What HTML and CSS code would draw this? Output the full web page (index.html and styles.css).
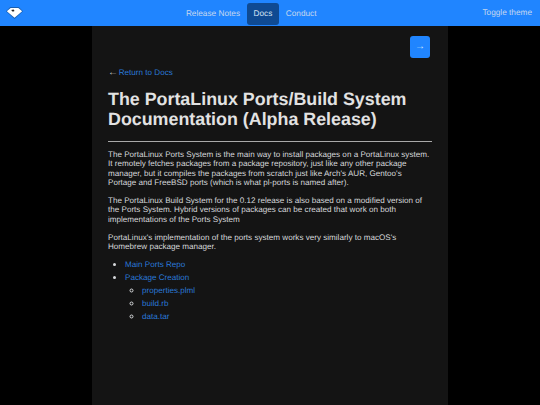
FILE: index.html
```html
<!DOCTYPE html>
<html lang="en">
<head>
<meta charset="utf-8">
<title>PortaLinux Ports</title>
<link rel="stylesheet" href="styles.css">
</head>
<body>
<header class="navbar">
  <a class="brand" href="#"><svg viewBox="0 0 20 14" width="17" height="12"><path fill="#1a5fb0" d="M0 5 5 0h10l5 5-10 9z"/><path fill="#fff" d="M1 5 5.500 1h9L19 5l-9 7.500z"/><path fill="#222" d="M6 3.500 9 2.800 10 4.500 8 5.500z"/></svg></a>
  <nav class="links">
    <a class="link" href="#">Release Notes</a>
    <a class="link active" href="#">Docs</a>
    <a class="link" href="#">Conduct</a>
  </nav>
  <a class="toggle" href="#">Toggle theme</a>
</header>
<main class="page">
  <div class="next-row"><a class="next" href="#">→</a></div>
  <p class="back"><span class="arrow">←</span> <a href="#">Return to Docs</a></p>
  <h1>The PortaLinux Ports/Build System Documentation (Alpha Release)</h1>
  <hr>
  <p>The PortaLinux Ports System is the main way to install packages on a PortaLinux system. It remotely fetches packages from a package repository, just like any other package manager, but it compiles the packages from scratch just like Arch's AUR, Gentoo's Portage and FreeBSD ports (which is what pl-ports is named after).</p>
  <p>The PortaLinux Build System for the 0.12 release is also based on a modified version of the Ports System. Hybrid versions of packages can be created that work on both implementations of the Ports System</p>
  <p>PortaLinux's implementation of the ports system works very similarly to macOS's Homebrew package manager.</p>
  <ul>
    <li><a href="#">Main Ports Repo</a></li>
    <li><a href="#">Package Creation</a>
      <ul>
        <li><a href="#">properties.plml</a></li>
        <li><a href="#">build.rb</a></li>
        <li><a href="#">data.tar</a></li>
      </ul>
    </li>
  </ul>
</main>
</body>
</html>
```
FILE: styles.css
```css
* { box-sizing: border-box; }
html, body { height: 100%; }
body {
  margin: 0;
  background: #000;
  color: #d6d8db;
  font-family: "Liberation Sans", Arial, sans-serif;
  font-size: 8.1px;
  line-height: 9.4px;
  text-rendering: geometricPrecision;
  display: flex;
  flex-direction: column;
  overflow: hidden;
}
a { color: #2a79d8; text-decoration: none; }
.navbar {
  height: 26px;
  flex: none;
  background: #2085ff;
  display: flex;
  align-items: center;
  padding: 0 6px;
  position: relative;
}
.brand { display: flex; margin-top: -1px; }
.links {
  flex: 1;
  display: flex;
  justify-content: center;
  align-items: center;
  padding-right: 3px;
}
.link, .toggle { color: #c4d7ef; font-size: 8.250px; }
.link { padding: 4px 7px; border-radius: 3px; height: 22px; display: flex; align-items: center; margin-top: 1px; }
.link.active { background: #0f4a92; color: #d6e2f2; padding: 4px 6.500px; }
.toggle { margin-right: 2px; }
.page {
  flex: 1;
  width: 356px;
  margin: 0 auto;
  background: #141414;
  padding: 10px 16px 0;
}
.next-row { display: flex; justify-content: flex-end; padding-right: 2px; }
.next {
  width: 20px;
  height: 22px;
  background: #2085ff;
  border-radius: 3px;
  color: #d6e6fa;
  font-size: 10px;
  display: flex;
  align-items: center;
  justify-content: center;
}
.back { margin: 9.500px 0 0; }
.arrow { color: #c8c8c8; font-size: 10px; margin-right: -1.500px; }
h1 {
  margin: 12px 0 0;
  font-size: 17.850px;
  line-height: 20px;
  font-weight: 700;
  color: #e2e2e2;
}
hr { margin: 12px 0 0; border: 0; border-top: 1px solid #a9a9a9; }
p { margin: 8.400px 0 0; }
hr + p { margin-top: 8px; }
ul { margin: 8.700px 0 0; padding-left: 17px; }
ul ul { margin: 0; padding-left: 17px; list-style-type: circle; }
li { margin-top: 3.700px; }
li::marker { font-size: 10px; }
ul > li:first-child { margin-top: 0; }
ul ul > li:first-child { margin-top: 3.700px; }
```
